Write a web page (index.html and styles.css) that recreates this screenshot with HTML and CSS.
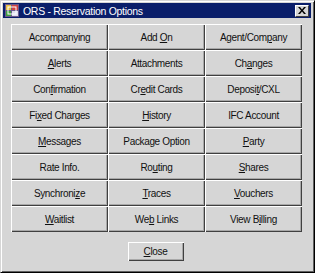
FILE: index.html
```html
<!DOCTYPE html>
<html>
  <head>
    <link rel="stylesheet" href="styles.css">
  </head>
  <body>
    <div class="window">
      <div class="titlebar">
        <span class="app-icon">
          <svg width="14" height="13" viewBox="0 0 14 13">
            <rect x="0" y="0" width="14" height="13" fill="#6b5a8c"/>
            <rect x="1" y="1" width="5" height="5" fill="#e8c040"/>
            <rect x="7" y="1" width="6" height="5" fill="#d04040"/>
            <rect x="1" y="7" width="5" height="5" fill="#40a040"/>
            <rect x="7" y="7" width="6" height="5" fill="#e0e0f0"/>
            <rect x="3" y="3" width="8" height="7" fill="none" stroke="#ffffff" stroke-width="1"/>
          </svg>
        </span>
        <span class="title">ORS - Reservation Options</span>
        <span class="close-x">
          <svg width="8" height="7" viewBox="0 0 8 7">
            <path d="M0 0h2l2 2.5 2-2.5h2l-3 3.5 3 3.5h-2l-2-2.5-2 2.5h-2l3-3.5z" fill="#000"/>
          </svg>
        </span>
      </div>

      <div class="options">
        <button class="opt">Accompanying</button>
        <button class="opt">Add <u>O</u>n</button>
        <button class="opt">Agent/Com<u>p</u>any</button>
        <button class="opt"><u>A</u>lerts</button>
        <button class="opt">Attachments</button>
        <button class="opt">Ch<u>a</u>nges</button>
        <button class="opt">Con<u>f</u>irmation</button>
        <button class="opt">Cr<u>e</u>dit Cards</button>
        <button class="opt">Deposi<u>t</u>/CXL</button>
        <button class="opt">Fi<u>x</u>ed Charges</button>
        <button class="opt"><u>H</u>istory</button>
        <button class="opt">IFC Account</button>
        <button class="opt"><u>M</u>essages</button>
        <button class="opt">Package Option</button>
        <button class="opt"><u>P</u>arty</button>
        <button class="opt">Rate Info.</button>
        <button class="opt">Ro<u>u</u>ting</button>
        <button class="opt"><u>S</u>hares</button>
        <button class="opt">Synchroni<u>z</u>e</button>
        <button class="opt"><u>T</u>races</button>
        <button class="opt"><u>V</u>ouchers</button>
        <button class="opt"><u>W</u>aitlist</button>
        <button class="opt">We<u>b</u> Links</button>
        <button class="opt">View B<u>i</u>lling</button>
      </div>

      <div class="footer">
        <button class="close-btn"><u>C</u>lose</button>
      </div>
    </div>
  </body>
</html>
```

FILE: styles.css
```css
body {
  margin: 0;
  background: #d6d6d6;
  font-family: "Liberation Sans", Arial, sans-serif;
  font-size: 10px;
}

.window {
  width: 315px;
  height: 273px;
  box-sizing: border-box;
  background: #d6d6d6;
  border-top: 1px solid #d6d6d6;
  border-left: 1px solid #d6d6d6;
  border-right: 1px solid #000;
  border-bottom: 1px solid #000;
  box-shadow: inset 1px 1px 0 #fff, inset -1px -1px 0 #606060;
  padding: 2px 3px 3px 2px;
}

.titlebar {
  height: 15px;
  background: #0a1e6a;
  color: #fff;
  display: flex;
  align-items: center;
  padding: 0 2px 0 2px;
}

.app-icon {
  display: flex;
  width: 14px;
  height: 13px;
  margin-right: 4px;
}

.title {
  flex: 1;
  font-size: 10.5px;
  letter-spacing: -0.3px;
}

.close-x {
  width: 14px;
  height: 12px;
  box-sizing: border-box;
  background: #d6d6d6;
  border-top: 1px solid #fff;
  border-left: 1px solid #fff;
  border-right: 1px solid #404040;
  border-bottom: 1px solid #404040;
  display: flex;
  align-items: center;
  justify-content: center;
}

.options {
  display: grid;
  grid-template-columns: 97px 97px 97px;
  grid-auto-rows: 26px;
  margin: 6px 0 0 8px;
}

.opt,
.close-btn {
  font-family: "Liberation Sans", Arial, sans-serif;
  font-size: 10px;
  letter-spacing: -0.35px;
  color: #111;
  background: #d6d6d6;
  border: none;
  border-radius: 0;
  padding: 0;
  box-shadow: inset 1px 1px 0 #fff, inset -1px -1px 0 #404040, inset -2px -2px 0 #a8a8a8;
}

.footer {
  display: flex;
  justify-content: center;
  margin-top: 10px;
  padding-right: 3px;
}

.close-btn {
  width: 56px;
  height: 19px;
}
```
